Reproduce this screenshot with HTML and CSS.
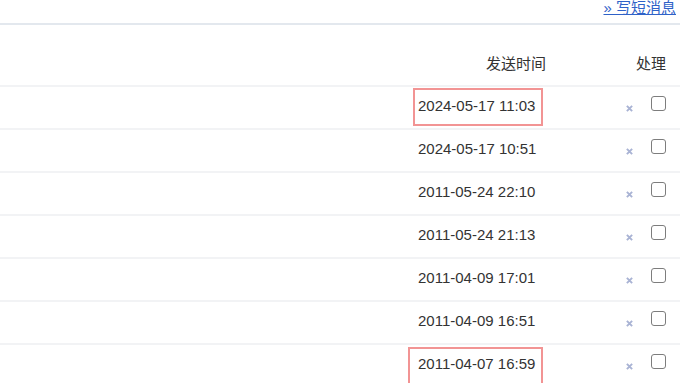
FILE: index.html
```html
<!DOCTYPE html>
<html lang="zh-CN">
	<head>
		<meta charset="UTF-8">
		<title>短消息</title>
		<link rel="stylesheet" href="styles.css">
	</head>
	<body>
		<div class="topbar">
			<a class="compose" href="#">» 写短消息</a>
		</div>

		<div class="msg-table">
			<div class="row head">
				<div class="c-subject"></div>
				<div class="c-time">发送时间</div>
				<div class="c-act">处理</div>
			</div>

			<div class="row">
				<div class="c-subject"></div>
				<div class="c-time mark mark-a">2024-05-17 11:03</div>
				<div class="c-act"><span class="del"><svg viewBox="0 0 8 8"><path d="M1 1L7 7M7 1L1 7"/></svg></span><input type="checkbox"></div>
			</div>
			<div class="row">
				<div class="c-subject"></div>
				<div class="c-time">2024-05-17 10:51</div>
				<div class="c-act"><span class="del"><svg viewBox="0 0 8 8"><path d="M1 1L7 7M7 1L1 7"/></svg></span><input type="checkbox"></div>
			</div>
			<div class="row">
				<div class="c-subject"></div>
				<div class="c-time">2011-05-24 22:10</div>
				<div class="c-act"><span class="del"><svg viewBox="0 0 8 8"><path d="M1 1L7 7M7 1L1 7"/></svg></span><input type="checkbox"></div>
			</div>
			<div class="row">
				<div class="c-subject"></div>
				<div class="c-time">2011-05-24 21:13</div>
				<div class="c-act"><span class="del"><svg viewBox="0 0 8 8"><path d="M1 1L7 7M7 1L1 7"/></svg></span><input type="checkbox"></div>
			</div>
			<div class="row">
				<div class="c-subject"></div>
				<div class="c-time">2011-04-09 17:01</div>
				<div class="c-act"><span class="del"><svg viewBox="0 0 8 8"><path d="M1 1L7 7M7 1L1 7"/></svg></span><input type="checkbox"></div>
			</div>
			<div class="row">
				<div class="c-subject"></div>
				<div class="c-time">2011-04-09 16:51</div>
				<div class="c-act"><span class="del"><svg viewBox="0 0 8 8"><path d="M1 1L7 7M7 1L1 7"/></svg></span><input type="checkbox"></div>
			</div>
			<div class="row">
				<div class="c-subject"></div>
				<div class="c-time mark mark-b">2011-04-07 16:59</div>
				<div class="c-act"><span class="del"><svg viewBox="0 0 8 8"><path d="M1 1L7 7M7 1L1 7"/></svg></span><input type="checkbox"></div>
			</div>
		</div>
	</body>
</html>
```

FILE: styles.css
```css
*, *::before, *::after {
    box-sizing: border-box;
    margin: 0;
    padding: 0;
}

body {
    font-family: "Liberation Sans", "Noto Sans CJK SC", sans-serif;
    font-size: 15px;
    color: #333;
    background: #fff;
    overflow: hidden;
}

/* Top bar with compose link */
.topbar {
    height: 25px;
    border-bottom: 2px solid #e3e8ee;
    text-align: right;
    padding-right: 4px;
    line-height: 15px;
}

.compose {
    color: #2f62c8;
    text-decoration: underline;
    display: inline-block;
    margin-top: -1px;
}

/* Message list */
.row {
    display: grid;
    grid-template-columns: 1fr 208px 67px;
    border-bottom: 2px solid #f2f3f5;
    height: 43px;
    line-height: 20px;
}

.row > div {
    padding-top: 9px;
}

.row.head {
    height: 62px;
}

.row.head > div {
    padding-top: 29px;
}

.c-time {
    padding-left: 13px;
    position: relative;
}

.head .c-time {
    padding-left: 0;
    padding-right: 67px;
    text-align: right;
}

.c-act {
    display: flex;
    align-items: center;
    justify-content: flex-end;
    padding-right: 14px;
    height: 29px;
}

.head .c-act {
    display: block;
    text-align: right;
    height: auto;
}

.del {
    display: inline-flex;
    width: 7px;
    height: 7px;
    margin-right: 18px;
    margin-top: 5px;
}

.del svg {
    width: 7px;
    height: 7px;
    stroke: #a9b3d4;
    stroke-width: 2.2;
    fill: none;
}

.c-act input {
    appearance: none;
    width: 15px;
    height: 15px;
    border: 1.5px solid #7d7d7d;
    border-radius: 3px;
    background: #fff;
    margin-top: -6px;
}

/* Red annotation boxes */
.mark::after {
    content: "";
    position: absolute;
    border: 2px solid #f29494;
}

.mark-a::after {
    left: 8px;
    top: 1px;
    width: 130px;
    height: 38px;
}

.mark-b::after {
    left: 3px;
    top: 2px;
    width: 135px;
    height: 44px;
}
```
